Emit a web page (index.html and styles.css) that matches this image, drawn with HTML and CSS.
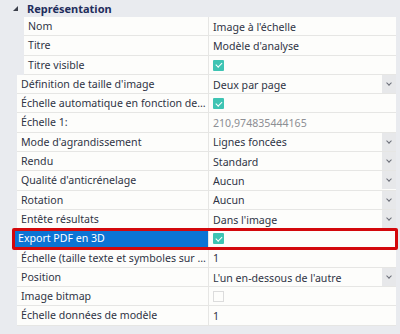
FILE: index.html
```html
<!DOCTYPE html>
<html lang="fr">
<head>
  <meta charset="UTF-8">
  <title>Propriétés</title>
  <link rel="stylesheet" href="styles.css">
</head>
<body>
  <div class="grid">
    <!-- Catégorie -->
    <div class="cat">
      <span class="cat-arrow"></span>
      <span class="cat-title">Représentation</span>
    </div>

    <div class="row sub">
      <div class="name">Nom</div>
      <div class="value">Image à l'échelle</div>
    </div>
    <div class="row sub">
      <div class="name">Titre</div>
      <div class="value">Modèle d'analyse</div>
    </div>
    <div class="row sub">
      <div class="name">Titre visible</div>
      <div class="value"><span class="check on"></span></div>
    </div>
    <div class="row">
      <div class="name">Définition de taille d'image</div>
      <div class="value">Deux par page<span class="drop"></span></div>
    </div>
    <div class="row">
      <div class="name">Échelle automatique en fonction de la taille</div>
      <div class="value"><span class="check on"></span></div>
    </div>
    <div class="row">
      <div class="name">Échelle 1:</div>
      <div class="value readonly">210,974835444165</div>
    </div>
    <div class="row">
      <div class="name">Mode d'agrandissement</div>
      <div class="value">Lignes foncées<span class="drop"></span></div>
    </div>
    <div class="row">
      <div class="name">Rendu</div>
      <div class="value">Standard<span class="drop"></span></div>
    </div>
    <div class="row">
      <div class="name">Qualité d'anticrénelage</div>
      <div class="value">Aucun<span class="drop"></span></div>
    </div>
    <div class="row">
      <div class="name">Rotation</div>
      <div class="value">Aucun<span class="drop"></span></div>
    </div>
    <div class="row">
      <div class="name">Entête résultats</div>
      <div class="value">Dans l'image<span class="drop"></span></div>
    </div>
    <div class="row selected">
      <div class="name">Export PDF en 3D</div>
      <div class="value"><span class="check on"></span></div>
    </div>
    <div class="row">
      <div class="name">Échelle (taille texte et symboles sur page)</div>
      <div class="value">1</div>
    </div>
    <div class="row">
      <div class="name">Position</div>
      <div class="value">L'un en-dessous de l'autre<span class="drop"></span></div>
    </div>
    <div class="row">
      <div class="name">Image bitmap</div>
      <div class="value"><span class="check"></span></div>
    </div>
    <div class="row">
      <div class="name">Échelle données de modèle</div>
      <div class="value">1</div>
    </div>
  </div>
</body>
</html>
```

FILE: styles.css
```css
* {
  box-sizing: border-box;
}

body {
  margin: 0;
  background: #e9ebef;
  font-family: "Noto Sans", "Open Sans", sans-serif;
  font-size: 10.6px;
  color: #2f3445;
}

.grid {
  width: 396px;
  padding-bottom: 10px;
}

/* Ligne de catégorie */
.cat {
  display: flex;
  align-items: center;
  height: 17px;
  padding-left: 13px;
}

.cat-arrow {
  width: 0;
  height: 0;
  border-style: solid;
  border-width: 0 0 5px 5px;
  border-color: transparent transparent #3b3f4a transparent;
  margin-right: 9px;
}

.cat-title {
  font-weight: bold;
  font-size: 11px;
  color: #1f2d5c;
}

/* Lignes de propriétés */
.row {
  display: grid;
  grid-template-columns: 192px 1fr;
  height: 19.3px;
  margin-left: 17px;
  background: #fdfdfb;
  border-bottom: 1px solid #e6e6e4;
}

.row.sub {
  grid-template-columns: 185px 1fr;
  margin-left: 24px;
}

.name {
  padding-left: 4px;
  padding-right: 2px;
  white-space: nowrap;
  overflow: hidden;
  text-overflow: ellipsis;
  line-height: 19px;
  border-right: 1px solid #e6e6e4;
}

.value {
  position: relative;
  display: flex;
  align-items: center;
  padding-left: 4px;
  padding-top: 1px;
  white-space: nowrap;
}

.value.readonly {
  color: #8d8f94;
}

/* Bouton déroulant */
.drop {
  position: absolute;
  right: 0;
  top: 0;
  width: 14px;
  height: 18px;
  background: #e7e8ea;
}

.drop::after {
  content: "";
  position: absolute;
  left: 5px;
  top: 6px;
  width: 3px;
  height: 3px;
  border-right: 1.5px solid #6b6e78;
  border-bottom: 1.5px solid #6b6e78;
  transform: rotate(45deg);
}

/* Cases à cocher */
.check {
  position: relative;
  display: inline-block;
  width: 11px;
  height: 11px;
  border: 1px solid #dcdcdc;
  background: #fdfdfb;
}

.check.on {
  border: none;
  border-radius: 1px;
  background: #3ec4b3;
}

.check.on::after {
  content: "";
  position: absolute;
  left: 4px;
  top: 1.5px;
  width: 2.5px;
  height: 5px;
  border-right: 1.5px solid #fff;
  border-bottom: 1.5px solid #fff;
  transform: rotate(45deg);
}

/* Ligne sélectionnée */
.row.selected {
  position: relative;
  margin-left: 14px;
  grid-template-columns: 195px 1fr;
}

.row.selected .name {
  background: #0c74d4;
  color: #fff;
}

.row.selected::after {
  content: "";
  position: absolute;
  left: -2px;
  right: -2px;
  top: -1px;
  bottom: -2px;
  border: 3px solid #d3080c;
  border-radius: 2px;
}
```
